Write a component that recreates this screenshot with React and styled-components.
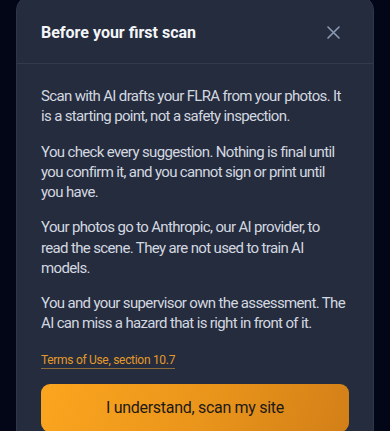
import React from 'react';
import styled, { createGlobalStyle } from 'styled-components';

const Global = createGlobalStyle`
  html, body {
    margin: 0;
    padding: 0;
    background: #030617;
    height: 431px;
    overflow: hidden;
  }
  * { box-sizing: border-box; }
`;

export default function App() {
  return (
    <>
      <Global />
      <Page>
        <Card>
          <Header>
            <Title>Before your first scan</Title>
            <Close aria-label="Close">
              <svg width="13" height="13" viewBox="0 0 13 13">
                <path d="M1 1 L12 12 M12 1 L1 12" stroke="#8b9ab4" strokeWidth="1.6" strokeLinecap="round" />
              </svg>
            </Close>
          </Header>
          <Body>
            <Para>Scan with AI drafts your FLRA from your photos. It is a starting point, not a safety inspection.</Para>
            <Para>You check every suggestion. Nothing is final until you confirm it, and you cannot sign or print until you have.</Para>
            <Para>Your photos go to Anthropic, our AI provider, to read the scene. They are not used to train AI models.</Para>
            <Para>You and your supervisor own the assessment. The AI can miss a hazard that is right in front of it.</Para>
            <Terms href="#">Terms of Use, section 10.7</Terms>
            <Confirm>I understand, scan my site</Confirm>
          </Body>
        </Card>
      </Page>
    </>
  );
}

const Page = styled.div`
  padding: 0 16px;
  font-family: Roboto, "Noto Sans", sans-serif;
`;
const Card = styled.div`
  margin-top: -4px;
  width: 358px;
  height: 460px;
  background: #252c3d;
  border: 1px solid #2f3648;
  border-radius: 14px;
  overflow: hidden;
`;
const Header = styled.div`
  display: flex;
  align-items: center;
  justify-content: space-between;
  height: 67px;
  padding: 4px 33px 0 24px;
  border-bottom: 1px solid #323a4d;
`;
const Title = styled.h2`
  margin: 0;
  font-size: 16px;
  font-weight: 700;
  color: #f3f5f8;
`;
const Close = styled.button`
  display: flex;
  padding: 0;
  border: none;
  background: none;
  cursor: pointer;
`;
const Body = styled.div`
  padding: 22px 24px 0 24px;
`;
const Para = styled.p`
  margin: 0 0 15px 0;
  font-size: 15px;
  letter-spacing: -0.65px;
  line-height: 20.25px;
  color: #d3d8e0;
`;
const Terms = styled.a`
  display: inline-block;
  margin-top: 3px;
  font-size: 12px;
  letter-spacing: -0.3px;
  color: #e39a2a;
  text-decoration: none;
  border-bottom: 1px solid #8c6a3a;
  line-height: 15px;
`;
const Confirm = styled.button`
  display: block;
  width: 100%;
  height: 48px;
  margin-top: 15px;
  border: none;
  border-radius: 9px;
  background: linear-gradient(110deg, #fba51f 0%, #eb961b 50%, #d27f18 100%);
  color: #1b1a17;
  font-family: inherit;
  font-size: 16px;
  letter-spacing: -0.3px;
  cursor: pointer;
`;
